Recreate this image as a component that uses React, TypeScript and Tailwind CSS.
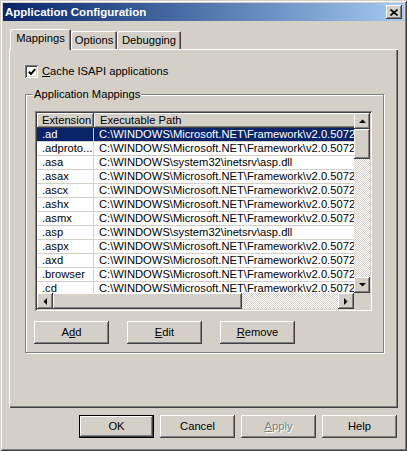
import type { ReactNode } from "react";

const raised =
  "shadow-[inset_-1px_-1px_0_#404040,inset_1px_1px_0_#ffffff,inset_-2px_-2px_0_#808080,inset_2px_2px_0_#d4d0c8]";
const sunken =
  "shadow-[inset_1px_1px_0_#808080,inset_-1px_-1px_0_#ffffff,inset_2px_2px_0_#404040,inset_-2px_-2px_0_#d4d0c8]";
const hatch =
  "bg-[repeating-conic-gradient(#d4d0c8_0_25%,#ffffff_0_50%)] bg-[length:2px_2px]";

const NET = "C:\\WINDOWS\\Microsoft.NET\\Framework\\v2.0.50727\\aspnet_isapi.dll";
const ASP = "C:\\WINDOWS\\system32\\inetsrv\\asp.dll";

const mappings = [
  { ext: ".ad", path: NET },
  { ext: ".adproto...", path: NET },
  { ext: ".asa", path: ASP },
  { ext: ".asax", path: NET },
  { ext: ".ascx", path: NET },
  { ext: ".ashx", path: NET },
  { ext: ".asmx", path: NET },
  { ext: ".asp", path: ASP },
  { ext: ".aspx", path: NET },
  { ext: ".axd", path: NET },
  { ext: ".browser", path: NET },
  { ext: ".cd", path: NET },
];

function Arrow({ dir }: { dir: "up" | "down" | "left" | "right" }) {
  const pts = {
    up: "0,4 7,4 3.5,0.5",
    down: "0,0 7,0 3.5,3.5",
    left: "4,0 4,7 0.5,3.5",
    right: "0,0 0,7 3.5,3.5",
  }[dir];
  const vertical = dir === "up" || dir === "down";
  return (
    <svg width={vertical ? 7 : 4} height={vertical ? 4 : 7} viewBox={vertical ? "0 0 7 4" : "0 0 4 7"}>
      <polygon points={pts} fill="#000" />
    </svg>
  );
}

function ScrollBtn({ dir }: { dir: "up" | "down" | "left" | "right" }) {
  return (
    <div className={`w-[16px] h-[16px] shrink-0 flex items-center justify-center bg-[#d4d0c8] ${raised}`}>
      <Arrow dir={dir} />
    </div>
  );
}

function Button({ children, def, disabled }: { children: ReactNode; def?: boolean; disabled?: boolean }) {
  return (
    <div className={`w-[75px] h-[23px] ${def ? "border border-black" : ""}`}>
      <div
        className={`w-full h-full flex items-center justify-center bg-[#d4d0c8] ${raised} ${
          disabled ? "text-[#808080] [text-shadow:1px_1px_0_#ffffff]" : ""
        }`}
      >
        {children}
      </div>
    </div>
  );
}

function Tab({ label, active, width }: { label: string; active?: boolean; width: string }) {
  return (
    <div
      className={`${width} flex items-center justify-center rounded-t-[2px] bg-[#d4d0c8] shadow-[inset_1px_1px_0_#ffffff,inset_-1px_0_0_#404040,inset_-2px_0_0_#808080] ${
        active ? "h-[21px] -mb-px relative z-10 pb-[2px]" : "h-[18px]"
      }`}
    >
      {label}
    </div>
  );
}

export default function App() {
  return (
    <div
      className={`w-[407px] h-[451px] bg-[#d4d0c8] p-[3px] flex flex-col font-['Liberation_Sans',Arial,sans-serif] text-[11.2px] leading-[13px] text-black shadow-[inset_1px_1px_0_#d4d0c8,inset_-1px_-1px_0_#404040,inset_2px_2px_0_#ffffff,inset_-2px_-2px_0_#808080]`}
    >
      {/* title bar */}
      <div className="h-[18px] shrink-0 flex items-center justify-between px-[2px] bg-linear-to-r from-[#0a246a] to-[#a6caf0]">
        <span className="text-white font-bold text-[11.5px]">Application Configuration</span>
        <div className={`w-[16px] h-[14px] flex items-center justify-center bg-[#d4d0c8] ${raised}`}>
          <svg width="8" height="7" viewBox="0 0 8 7">
            <path d="M0.5 0.5 L7.5 6.5 M7.5 0.5 L0.5 6.5" stroke="#000" strokeWidth="1.6" />
          </svg>
        </div>
      </div>

      <div className="flex-1 flex flex-col px-[6px] pt-[8px]">
        {/* tabs */}
        <div className="h-[20px] flex items-end pl-[1px]">
          <Tab label="Mappings" active width="w-[61px]" />
          <Tab label="Options" width="w-[46px]" />
          <Tab label="Debugging" width="w-[64px]" />
        </div>

        {/* tab panel */}
        <div className="h-[359px] pl-[16px] pt-[16px] shadow-[inset_1px_1px_0_#ffffff,inset_-1px_-1px_0_#404040,inset_-2px_-2px_0_#808080]">
          <div className="flex items-center h-[13px]">
            <div className={`w-[13px] h-[13px] bg-white flex items-center justify-center ${sunken}`}>
              <svg width="8" height="8" viewBox="0 0 8 8">
                <path d="M0.8 3.6 L3 6 L7.2 1.2" fill="none" stroke="#000" strokeWidth="1.9" />
              </svg>
            </div>
            <span className="ml-[4px]">
              <u>C</u>ache ISAPI applications
            </span>
          </div>

          {/* group box */}
          <div className="relative mt-[16px] w-[359px] h-[259px] border border-[#808080] shadow-[inset_1px_1px_0_#ffffff,1px_1px_0_#ffffff] pl-[9px] pt-[16px]">
            <span className="absolute -top-[7px] left-[7px] px-px bg-[#d4d0c8]">Application Mappings</span>

            {/* list view */}
            <div className={`w-[337px] h-[200px] p-[2px] bg-white flex flex-col ${sunken}`}>
              <div className="flex h-[180px]">
                <div className="w-[317px] overflow-hidden bg-white">
                  <div className="flex h-[15px] w-[480px]">
                    <div className={`w-[57px] pl-[5px] flex items-center bg-[#d4d0c8] ${raised}`}>Extension</div>
                    <div className={`flex-1 pl-[6px] flex items-center bg-[#d4d0c8] ${raised}`}>Executable Path</div>
                  </div>
                  {mappings.map((m, i) => (
                    <div
                      key={m.ext}
                      className={`flex h-[14px] w-[480px] border-b border-[#d4d0c8] whitespace-nowrap ${
                        i === 0 ? "bg-[#0a246a] text-white" : ""
                      }`}
                    >
                      <div className="w-[57px] shrink-0 pl-[5px] border-r border-[#d4d0c8]">{m.ext}</div>
                      <div className="pl-[5px]">{m.path}</div>
                    </div>
                  ))}
                </div>
                <div className="w-[16px] flex flex-col">
                  <ScrollBtn dir="up" />
                  <div className={`h-[30px] shrink-0 bg-[#d4d0c8] ${raised}`} />
                  <div className={`flex-1 ${hatch}`} />
                  <ScrollBtn dir="down" />
                </div>
              </div>
              <div className="flex h-[16px]">
                <ScrollBtn dir="left" />
                <div className={`w-[189px] shrink-0 bg-[#d4d0c8] ${raised}`} />
                <div className={`flex-1 ${hatch}`} />
                <ScrollBtn dir="right" />
                <div className="w-[16px] bg-[#d4d0c8]" />
              </div>
            </div>

            <div className="flex gap-[18px] mt-[10px] -ml-px">
              <Button>
                A<u>d</u>d
              </Button>
              <Button>
                <u>E</u>dit
              </Button>
              <Button>
                <u>R</u>emove
              </Button>
            </div>
          </div>
        </div>

        {/* dialog buttons */}
        <div className="flex justify-end gap-[6px] mt-[7px] pr-px">
          <Button def>OK</Button>
          <Button>Cancel</Button>
          <Button disabled>
            <u>A</u>pply
          </Button>
          <Button>Help</Button>
        </div>
      </div>
    </div>
  );
}
